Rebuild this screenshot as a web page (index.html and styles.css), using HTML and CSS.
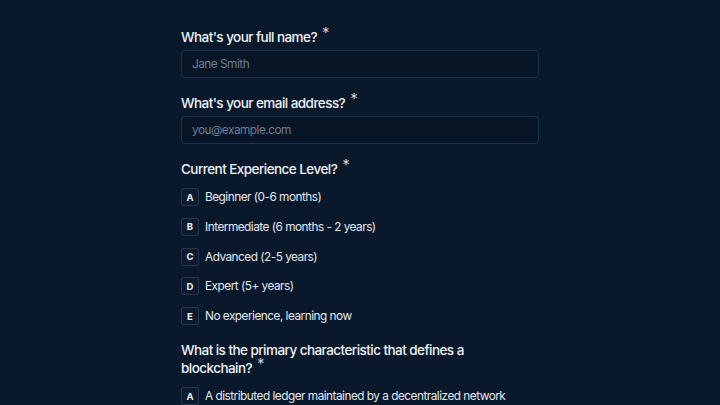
FILE: index.html
```html
<!DOCTYPE html>
<html lang="en">
<head>
<meta charset="utf-8">
<title>Form</title>
<link rel="stylesheet" href="styles.css">
</head>
<body>
<main class="form">
  <section class="field">
    <label class="label">What's your full name?<span class="req">*</span></label>
    <div class="input"><span class="placeholder">Jane Smith</span></div>
  </section>
  <section class="field">
    <label class="label">What's your email address?<span class="req">*</span></label>
    <div class="input"><span class="placeholder">you@example.com</span></div>
  </section>
  <section class="field">
    <label class="label label-opts">Current Experience Level?<span class="req">*</span></label>
    <ul class="options">
      <li class="option"><span class="key">A</span><span class="text">Beginner (0-6 months)</span></li>
      <li class="option"><span class="key">B</span><span class="text">Intermediate (6 months - 2 years)</span></li>
      <li class="option"><span class="key">C</span><span class="text">Advanced (2-5 years)</span></li>
      <li class="option"><span class="key">D</span><span class="text">Expert (5+ years)</span></li>
      <li class="option"><span class="key">E</span><span class="text">No experience, learning now</span></li>
    </ul>
  </section>
  <section class="field">
    <label class="label label-opts">What is the primary characteristic that defines a blockchain?<span class="req">*</span></label>
    <ul class="options">
      <li class="option"><span class="key">A</span><span class="text">A distributed ledger maintained by a decentralized network</span></li>
    </ul>
  </section>
</main>
</body>
</html>
```
FILE: styles.css
```css
html, body {
  margin: 0;
  padding: 0;
  background: #0a182b;
  height: 100%;
  overflow: hidden;
}
body {
  font-family: Inter, "Noto Sans", "Liberation Sans", sans-serif;
  color: #eef2f7;
}
.form {
  width: 358px;
  margin: 0 auto;
  padding-top: 28px;
  display: flex;
  flex-direction: column;
  gap: 16px;
}
.field {
  display: flex;
  flex-direction: column;
}
.label {
  display: block;
  font-size: 13.5px;
  font-weight: 500;
  letter-spacing: -0.55px;
  line-height: 18px;
  height: auto;
  color: #eef2f7;
  margin-bottom: 4px;
  padding-right: 60px;
}
.label-opts {
  margin-bottom: 10px;
}
.req {
  margin-left: 5px;
  font-size: 15px;
  line-height: 0;
  vertical-align: 4px;
  color: #c3ccd8;
  font-weight: 400;
}
.input {
  box-sizing: border-box;
  height: 28px;
  border: 1px solid #1b334a;
  border-radius: 4px;
  background: #081527;
  display: flex;
  align-items: center;
  padding: 0 10px;
}
.placeholder {
  font-size: 11.8px;
  letter-spacing: -0.5px;
  color: #6e7d90;
}
.options {
  list-style: none;
  margin: 0;
  padding: 0;
  display: flex;
  flex-direction: column;
  gap: 11.75px;
}
.option {
  display: flex;
  align-items: center;
  gap: 6px;
  height: 18px;
}
.key {
  box-sizing: border-box;
  width: 18px;
  height: 18px;
  border: 1px solid #23384e;
  border-radius: 2px;
  background: #0c1b2f;
  display: flex;
  align-items: center;
  justify-content: center;
  font-size: 9.5px;
  font-weight: 700;
  color: #eef2f7;
}
.text {
  font-size: 11.8px;
  letter-spacing: -0.5px;
  color: #e3e8ef;
  white-space: nowrap;
}
```
